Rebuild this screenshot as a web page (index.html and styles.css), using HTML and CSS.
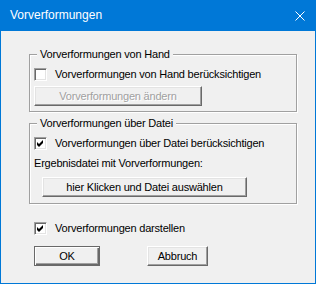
FILE: index.html
```html
<!DOCTYPE html>
<html lang="de">
<head>
    <meta charset="UTF-8">
    <title>Vorverformungen</title>
    <link rel="stylesheet" href="styles.css">
</head>
<body>
    <div class="dialog">
        <div class="titlebar">
            <span class="title">Vorverformungen</span>
            <svg class="close" width="10" height="10" viewBox="0 0 10 10">
                <path d="M0.5 0.5 L9.5 9.5 M9.5 0.5 L0.5 9.5" stroke="#fff" stroke-width="1" fill="none"/>
            </svg>
        </div>

        <div class="content">
            <div class="group">
                <div class="legend">Vorverformungen von Hand</div>
                <label class="check">
                    <span class="box"></span>
                    Vorverformungen von Hand berücksichtigen
                </label>
                <button type="button" class="btn btn-change" disabled>Vorverformungen ändern</button>
            </div>

            <div class="group group-file">
                <div class="legend">Vorverformungen über Datei</div>
                <label class="check">
                    <span class="box checked">
                        <svg width="7" height="7" viewBox="0 0 7 7"><path d="M0 2 L2 4 L6 0 L6 3 L2 7 L0 5 Z" fill="#000"/></svg>
                    </span>
                    Vorverformungen über Datei berücksichtigen
                </label>
                <div class="note">Ergebnisdatei mit Vorverformungen:</div>
                <button type="button" class="btn btn-file">hier Klicken und Datei auswählen</button>
            </div>

            <label class="check check-show">
                <span class="box checked">
                    <svg width="7" height="7" viewBox="0 0 7 7"><path d="M0 2 L2 4 L6 0 L6 3 L2 7 L0 5 Z" fill="#000"/></svg>
                </span>
                Vorverformungen darstellen
            </label>

            <div class="actions">
                <button type="button" class="btn btn-ok">OK</button>
                <button type="button" class="btn btn-cancel">Abbruch</button>
            </div>
        </div>
    </div>
</body>
</html>
```

FILE: styles.css
```css
:root {
    --face: #f0f0f0;
    --title: #0078d7;
    --shadow: #a0a0a0;
    --dark: #696969;
    --light: #e3e3e3;
}

* {
    margin: 0;
    padding: 0;
    box-sizing: border-box;
}

body {
    font-family: 'Liberation Sans', Arial, sans-serif;
    font-size: 11px;
    line-height: 13px;
    letter-spacing: -0.2px;
    color: #000;
    background: var(--face);
}

.dialog {
    width: 316px;
    height: 284px;
    background: var(--face);
    border: 1px solid var(--title);
    border-top: none;
}

.titlebar {
    height: 31px;
    margin: 0 -1px;
    padding: 0 11px 0 10px;
    background: var(--title);
    display: flex;
    align-items: center;
    justify-content: space-between;
}

.title {
    color: #fff;
    font-size: 12px;
    line-height: 31px;
    letter-spacing: 0;
}

.close {
    display: block;
    margin-top: 1px;
}

.content {
    padding: 0 18px 0 28px;
    display: flex;
    flex-direction: column;
    align-items: flex-start;
}

.group {
    width: 268px;
    margin-top: 23px;
    padding: 0 0 5px 4px;
    border: 1px solid var(--shadow);
    box-shadow: inset 1px 1px #fff, 1px 1px #fff;
    display: flex;
    flex-direction: column;
    align-items: flex-start;
}

.group-file {
    margin-top: 11px;
    padding-bottom: 6px;
}

.legend {
    margin: -7px 0 0 3px;
    padding: 0 3px;
    background: var(--face);
}

.check {
    display: flex;
    align-items: center;
    height: 13px;
    margin-top: 7px;
}

.box {
    width: 13px;
    height: 13px;
    margin-right: 8px;
    background: #fff;
    border: 1px solid;
    border-color: var(--shadow) #fff #fff var(--shadow);
    box-shadow: inset 1px 1px var(--dark), inset -1px -1px var(--light);
    display: flex;
    align-items: center;
    justify-content: center;
}

.note {
    margin-top: 7px;
}

.btn {
    height: 20px;
    font: inherit;
    letter-spacing: inherit;
    color: #000;
    background: var(--face);
    border: 1px solid;
    border-color: #fff var(--dark) var(--dark) #fff;
    box-shadow: inset -1px -1px var(--shadow), inset 1px 1px var(--light);
}

.btn:disabled {
    color: var(--shadow);
    text-shadow: 1px 1px #fff;
}

.btn-change {
    width: 168px;
    margin-top: 5px;
}

.btn-file {
    width: 205px;
    margin: 7px 0 0 8px;
}

.check-show {
    margin: 18px 0 0 5px;
}

.actions {
    display: flex;
    gap: 47px;
    margin: 11px 0 0 5px;
}

.btn-ok {
    width: 66px;
    border-color: var(--dark);
    box-shadow: inset 1px 1px #fff, inset -1px -1px var(--dark), inset -2px -2px var(--shadow);
}

.btn-cancel {
    width: 61px;
}
```
